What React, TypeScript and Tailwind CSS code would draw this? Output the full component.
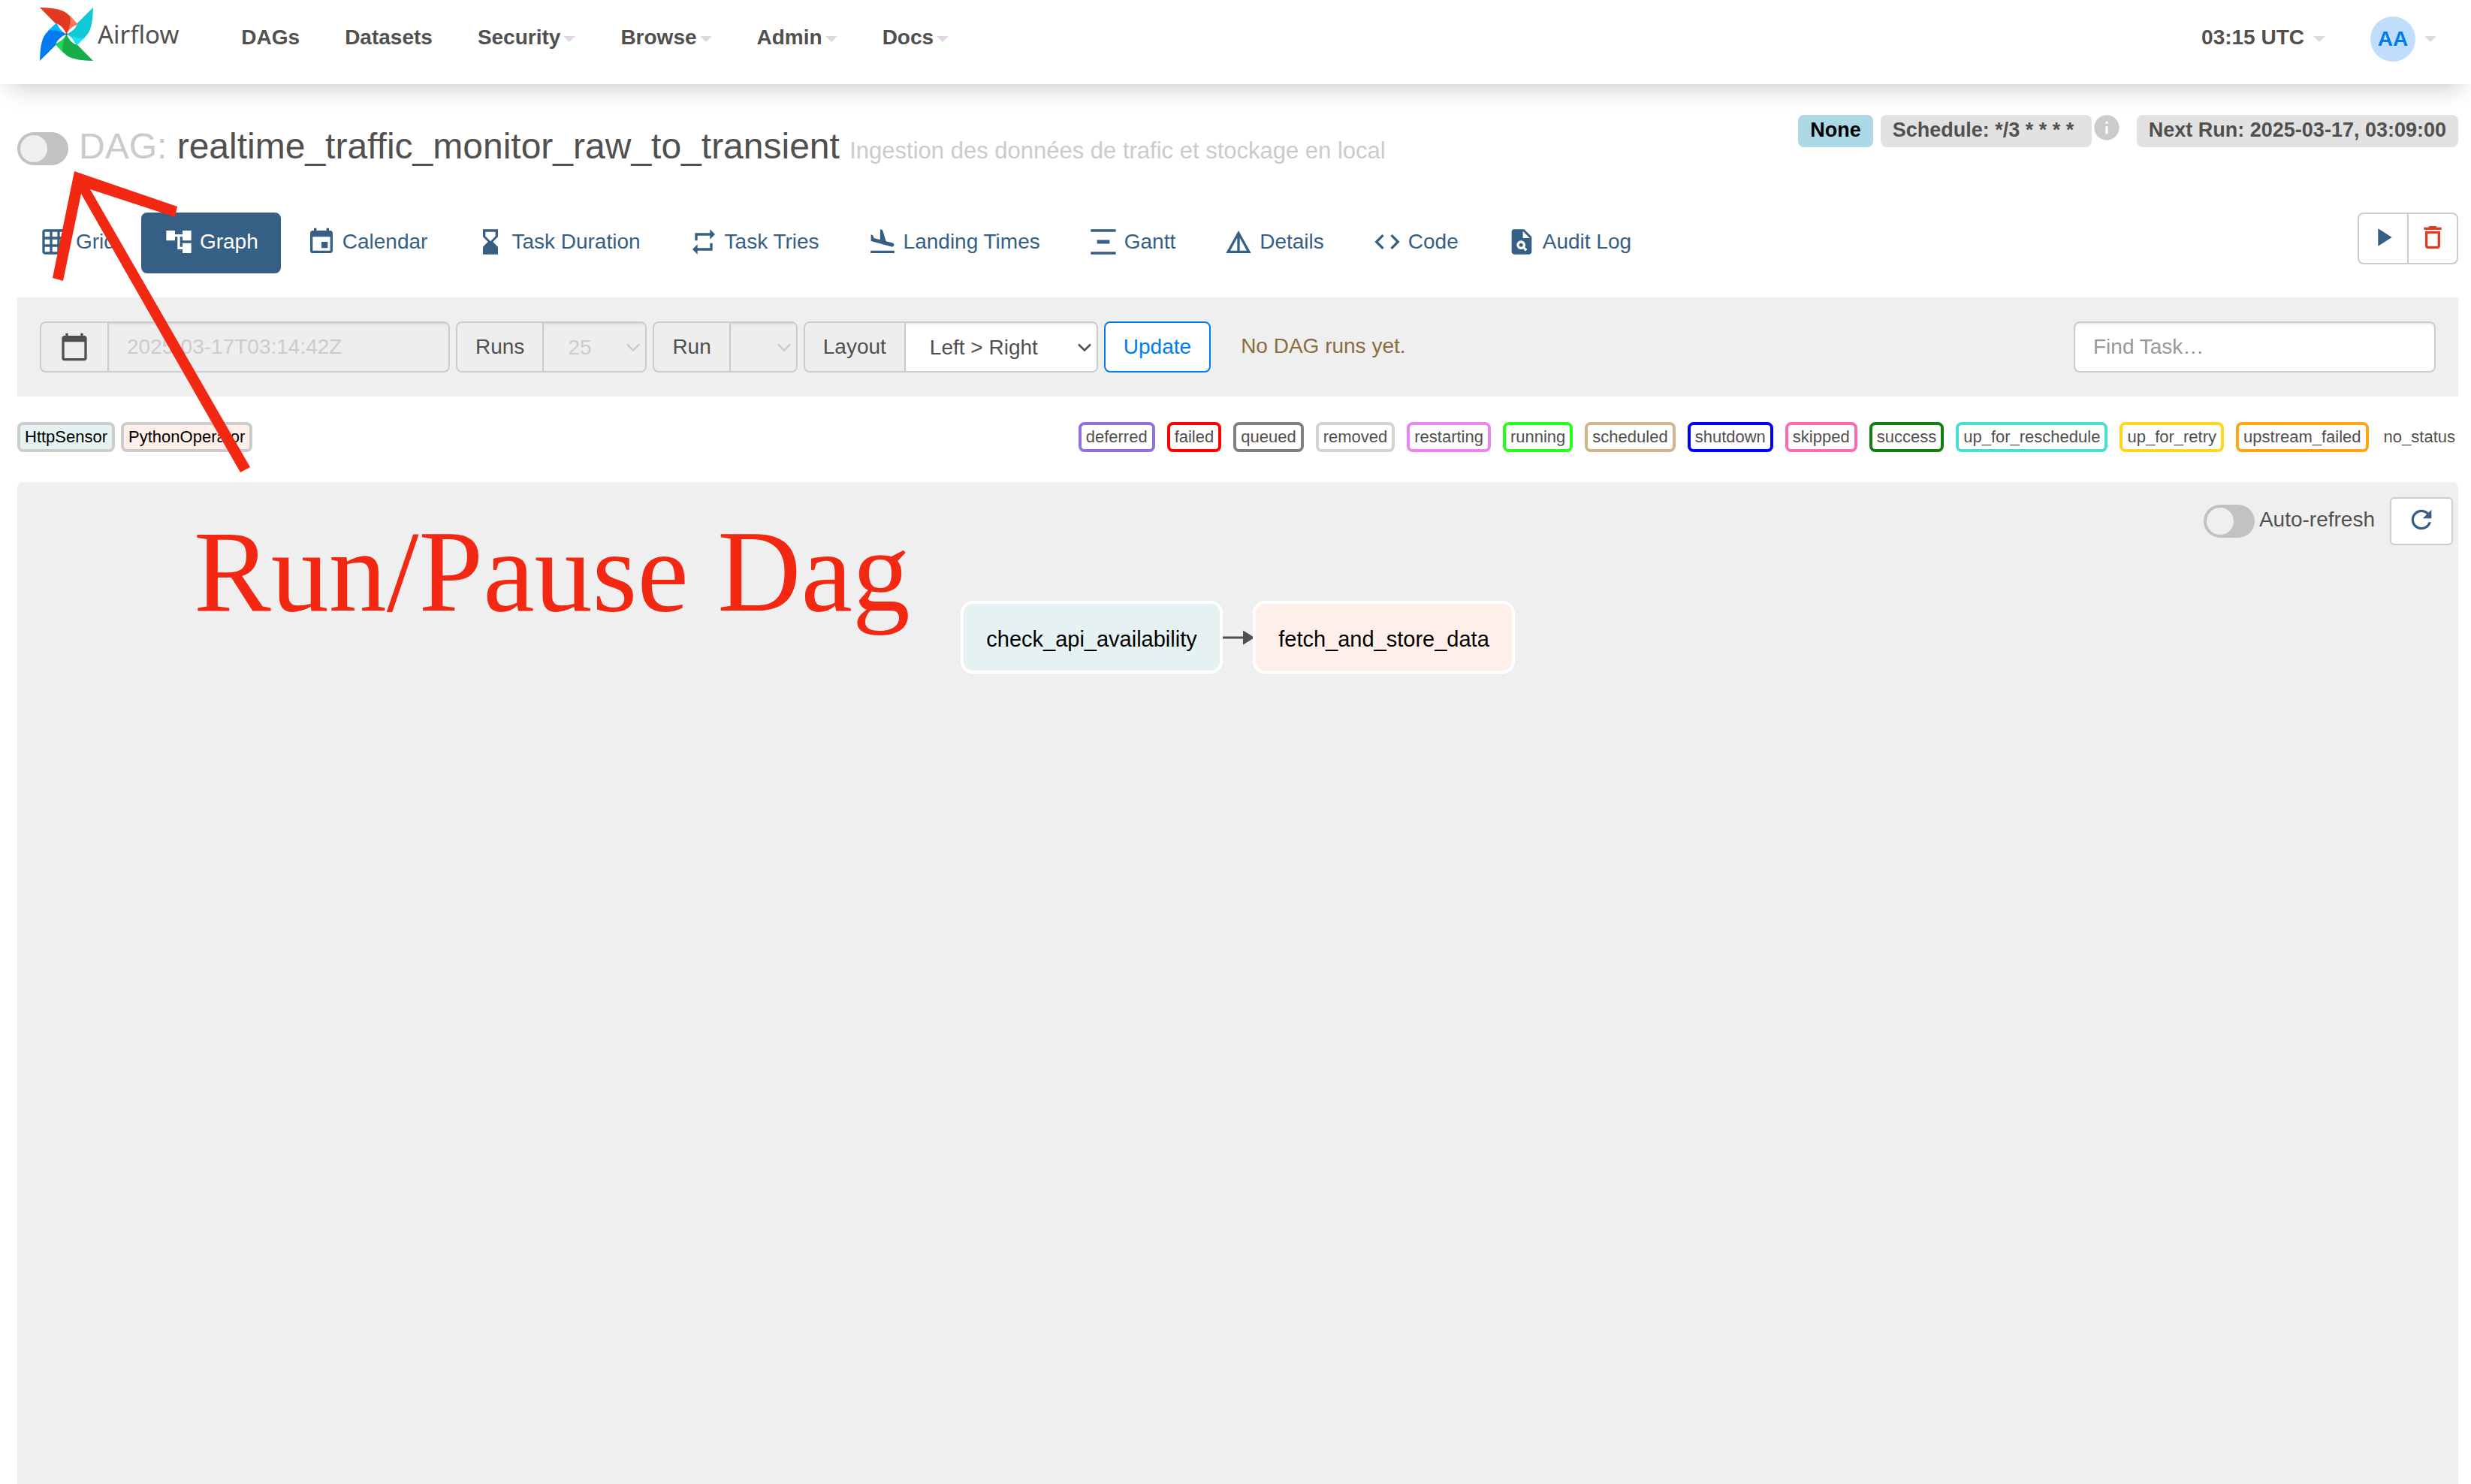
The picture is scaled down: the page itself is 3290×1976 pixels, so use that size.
import React from "react";
import type { IconType } from "react-icons";
import {
  MdAccountTree,
  MdCalendarToday,
  MdCode,
  MdDeleteOutline,
  MdDetails,
  MdEvent,
  MdFlightLand,
  MdGridOn,
  MdHourglassBottom,
  MdInfo,
  MdPlagiarism,
  MdPlayArrow,
  MdRefresh,
  MdRepeat,
  MdVerticalDistribute,
} from "react-icons/md";

const navItems = [
  { label: "DAGs", menu: false },
  { label: "Datasets", menu: false },
  { label: "Security", menu: true },
  { label: "Browse", menu: true },
  { label: "Admin", menu: true },
  { label: "Docs", menu: true },
];

const tabs: { label: string; icon: IconType; active?: boolean }[] = [
  { label: "Grid", icon: MdGridOn },
  { label: "Graph", icon: MdAccountTree, active: true },
  { label: "Calendar", icon: MdEvent },
  { label: "Task Duration", icon: MdHourglassBottom },
  { label: "Task Tries", icon: MdRepeat },
  { label: "Landing Times", icon: MdFlightLand },
  { label: "Gantt", icon: MdVerticalDistribute },
  { label: "Details", icon: MdDetails },
  { label: "Code", icon: MdCode },
  { label: "Audit Log", icon: MdPlagiarism },
];

const states = [
  { label: "deferred", border: "border-[#9370db]" },
  { label: "failed", border: "border-[#ff0000]" },
  { label: "queued", border: "border-[#808080]" },
  { label: "removed", border: "border-[#d3d3d3]" },
  { label: "restarting", border: "border-[#ee82ee]" },
  { label: "running", border: "border-[#27ff1a]" },
  { label: "scheduled", border: "border-[#d2b48c]" },
  { label: "shutdown", border: "border-[#0000ff]" },
  { label: "skipped", border: "border-[#ff69b4]" },
  { label: "success", border: "border-[#0f800f]" },
  { label: "up_for_reschedule", border: "border-[#46e0d0]" },
  { label: "up_for_retry", border: "border-[#ffd71a]" },
  { label: "upstream_failed", border: "border-[#ffa514]" },
];

function Caret({ className = "mt-1" }: { className?: string }) {
  return (
    <svg className={`h-2 w-4 shrink-0 fill-[#e2d5e4] ${className}`} viewBox="0 0 16 8" aria-hidden="true">
      <path d="M0 0H16L8 8Z" />
    </svg>
  );
}

function Pinwheel() {
  const blades = [
    { turn: 0, dark: "#e43921", light: "#ff7557" },
    { turn: 90, dark: "#11c9d6", light: "#1fe2ef" },
    { turn: 180, dark: "#18ad49", light: "#20d75c" },
    { turn: 270, dark: "#017cee", light: "#0cb6ff" },
  ];
  return (
    <svg className="size-[71px]" viewBox="0 0 213 213" aria-hidden="true">
      {blades.map((b) => (
        <g key={b.turn} transform={`rotate(${b.turn} 106.5 106.5)`}>
          <path fill={b.light} d="M118 30L152 67C128 78 114 90 106.5 106.5Z" />
          <path fill={b.dark} d="M0 0C60 2 98 8 118 33C126 45 122 76 106.5 106.5C97 86 84 68 62 63Z" />
        </g>
      ))}
      <circle cx="106.5" cy="106.5" r="4" fill="#51504f" />
    </svg>
  );
}

function Toggle({ id, label }: { id: string; label?: string }) {
  return (
    <input
      id={id}
      type="checkbox"
      role="switch"
      aria-label={label}
      className="h-11 w-[68px] shrink-0 cursor-pointer appearance-none rounded-full bg-[#c3c2c0] before:m-1 before:block before:size-9 before:rounded-full before:bg-[#efefef] before:content-['']"
    />
  );
}

function SelectField({
  id,
  label,
  options,
  width,
  disabled,
}: {
  id: string;
  label: string;
  options: string[];
  width: string;
  disabled?: boolean;
}) {
  return (
    <div className="flex h-[68px] overflow-hidden rounded-lg border-2 border-[#ccc] bg-[#eee]">
      <label htmlFor={id} className="flex items-center border-r-2 border-[#ccc] px-6">
        {label}
      </label>
      <div className={`relative ${width}`}>
        <select
          id={id}
          disabled={disabled}
          className="size-full appearance-none bg-white pt-[2px] pl-8 shadow-[inset_0_2px_2px_rgba(0,0,0,0.075)] disabled:bg-[#eee] disabled:text-[#ccc] disabled:opacity-100"
        >
          {options.map((o) => (
            <option key={o}>{o}</option>
          ))}
        </select>
        <svg
          className={`pointer-events-none absolute top-[27px] right-[7px] h-3 w-[18px] fill-none ${disabled ? "stroke-[#ccc]" : "stroke-[#51504f]"}`}
          viewBox="0 0 18 12"
          strokeWidth="2.5"
          aria-hidden="true"
        >
          <path d="M1 1.5L9 9.5L17 1.5" />
        </svg>
      </div>
    </div>
  );
}

function NavBar() {
  return (
    <nav className="flex h-28 items-start bg-white pr-[46px] pl-[53px] text-[28px] leading-10 font-bold shadow-[0_16px_32px_-12px_rgba(0,0,0,0.22)]">
      <a href="#home" className="flex items-start gap-[6px] pt-[10px]">
        <Pinwheel />
        <span className="pt-4 font-['Noto_Sans'] text-[33px] leading-10 font-normal">Airflow</span>
      </a>
      <ul className="ml-[53px] flex">
        {navItems.map((item) => (
          <li key={item.label}>
            <a href={`#${item.label.toLowerCase()}`} className="flex items-center gap-1 px-[30px] pt-[30px] pb-[42px]">
              {item.label}
              {item.menu && <Caret />}
            </a>
          </li>
        ))}
      </ul>
      <div className="ml-auto flex items-start">
        <button type="button" className="flex items-center gap-3 pt-[30px]">
          03:15 UTC
          <Caret />
        </button>
        <button type="button" className="ml-[60px] flex items-center gap-3 pt-[22px]">
          <span className="flex size-[60px] items-center justify-center rounded-full bg-[#c0ddfc] text-[#017cee]">AA</span>
          <Caret className="mt-0" />
        </button>
      </div>
    </nav>
  );
}

function DagHeader() {
  return (
    <header className="flex items-start justify-between">
      <div className="mt-[14px] flex items-start gap-[14px]">
        <div className="flex pt-[9px]">
          <Toggle id="pause" label="Pause or unpause the DAG" />
        </div>
        <h1 className="text-[48px] leading-[56px]">
          <span className="text-[#cbcbcb]">DAG: </span>
          realtime_traffic_monitor_raw_to_transient{" "}
          <small className="text-[31px] leading-none text-[#cbcbcb]">
            Ingestion des données de trafic et stockage en local
          </small>
        </h1>
      </div>
      <div className="flex items-start text-[27px] leading-10 font-bold">
        <a href="#runs" className="h-[43px] rounded-lg bg-[#add8e6] px-4 text-black">
          None
        </a>
        <a href="#schedule" className="ml-[10px] h-[43px] rounded-lg bg-[#e2e2e2] px-4">
          Schedule: */3 * * * *&nbsp;
        </a>
        <MdInfo className="-mt-[3px] size-10 text-[#cbcbcb]" />
        <span className="ml-5 h-[43px] rounded-lg bg-[#e2e2e2] px-4">Next Run: 2025-03-17, 03:09:00</span>
      </div>
    </header>
  );
}

function Tabs() {
  return (
    <div className="mt-[60px] flex items-start justify-between">
      <ul className="flex gap-1">
        {tabs.map(({ label, icon: Icon, active }) => (
          <li key={label}>
            <a
              href={`#${label.toLowerCase().replace(" ", "-")}`}
              className={`flex items-center gap-2 rounded-lg px-[30px] pt-[19px] pb-[22px] ${active ? "bg-[#355f84] text-white" : "text-[#355f84]"}`}
            >
              <Icon className="size-10" />
              {label}
            </a>
          </li>
        ))}
      </ul>
      <div className="flex h-[69px] rounded-lg border-2 border-[#ccc]">
        <button type="button" aria-label="Trigger DAG" className="border-r-2 border-[#ccc] px-3 pb-1 text-[#355f84]">
          <MdPlayArrow className="size-10" />
        </button>
        <button type="button" aria-label="Delete DAG" className="px-3 pb-1 text-[#e43921]">
          <MdDeleteOutline className="size-10" />
        </button>
      </div>
    </div>
  );
}

function FilterBar() {
  return (
    <form className="mt-8 flex items-center gap-2 bg-[#efefef] px-[30px] py-8">
      <div className="flex h-[68px] w-[546px] overflow-hidden rounded-lg border-2 border-[#ccc] bg-[#eee]">
        <label htmlFor="base-date" className="flex items-center border-r-2 border-[#ccc] px-6" aria-label="Base date">
          <MdCalendarToday className="size-10" />
        </label>
        <input
          id="base-date"
          disabled
          defaultValue="2025-03-17T03:14:42Z"
          className="min-w-0 flex-1 px-6 text-[#ccc] shadow-[inset_0_2px_2px_rgba(0,0,0,0.075)]"
        />
      </div>
      <SelectField id="num-runs" label="Runs" options={["25"]} width="w-[135px]" disabled />
      <SelectField id="run" label="Run" options={[]} width="w-[87px]" disabled />
      <SelectField id="layout" label="Layout" options={["Left > Right"]} width="w-[254px]" />
      <button type="button" className="h-[68px] rounded-lg border-2 border-[#017cee] bg-white px-6 text-[#017cee]">
        Update
      </button>
      <p className="ml-8 pb-[2px] text-[#8a6d3b]">No DAG runs yet.</p>
      <input
        type="search"
        aria-label="Find Task"
        placeholder="Find Task…"
        className="ml-auto h-[68px] w-[482px] rounded-lg border-2 border-[#ccc] bg-white px-6 shadow-[inset_0_2px_2px_rgba(0,0,0,0.075)] placeholder:text-[#999]"
      />
    </form>
  );
}

function Legend() {
  return (
    <div className="mt-[34px] flex justify-between text-[22px] leading-8">
      <div className="flex gap-2 text-black">
        <span className="rounded-lg border-4 border-[#ccc] bg-[#e6f1f2] px-[6px]">HttpSensor</span>
        <span className="rounded-lg border-4 border-[#ccc] bg-[#ffefeb] px-[6px]">PythonOperator</span>
      </div>
      <div className="flex gap-4">
        {states.map((s) => (
          <span key={s.label} className={`rounded-lg border-4 px-[6px] ${s.border}`}>
            {s.label}
          </span>
        ))}
        <span className="px-1 py-1">no_status</span>
      </div>
    </div>
  );
}

function GraphPanel() {
  return (
    <section className="mt-10 flex-1 rounded-t-lg bg-[#efefef] pt-5">
      <div className="flex items-center justify-end pr-[7px]">
        <Toggle id="auto-refresh" />
        <label htmlFor="auto-refresh" className="mr-5 pb-[5px] pl-[6px]">
          Auto-refresh
        </label>
        <button
          type="button"
          aria-label="Refresh"
          className="flex h-16 w-[84px] items-center justify-center rounded-md border-2 border-[#ccc] bg-white pb-1 text-[#355f84]"
        >
          <MdRefresh className="size-10" />
        </button>
      </div>
      <div className="mt-[74px] flex items-center justify-center text-[29px] text-black">
        <div className="flex h-[97px] w-[349px] items-center justify-center rounded-2xl border-4 border-white bg-[#e6f1f2] pt-1">
          check_api_availability
        </div>
        <svg className="h-5 w-10" viewBox="0 0 40 20" fill="#51504f" aria-hidden="true">
          <path d="M0 8.5H27V0.5L40 8.5V11.5L27 19.5V11.5H0Z" />
        </svg>
        <div className="flex h-[97px] w-[349px] items-center justify-center rounded-2xl border-4 border-white bg-[#ffefeb] pt-1">
          fetch_and_store_data
        </div>
      </div>
    </section>
  );
}

function Annotation() {
  return (
    <>
      <svg
        className="pointer-events-none absolute top-[228px] left-[69px] h-[401px] w-[264px]"
        viewBox="69 228 264 401"
        fill="#f32813"
        aria-hidden="true"
      >
        <path d="M99 228L236 275L233 289L120 252L333 622L320 629L108 258L84 374L70 370Z" />
      </svg>
      <p className="pointer-events-none absolute top-[673px] left-[258px] font-['Liberation_Serif'] text-[154px] leading-[176px] whitespace-nowrap text-[#f32813]">
        Run/Pause Dag
      </p>
    </>
  );
}

export default function App() {
  return (
    <div className="relative flex min-h-screen flex-col bg-white font-['Liberation_Sans',Arial,sans-serif] text-[28px] leading-10 text-[#51504f]">
      <NavBar />
      <main className="flex flex-1 flex-col pt-[41px] pr-[17px] pl-[23px]">
        <DagHeader />
        <Tabs />
        <FilterBar />
        <Legend />
        <GraphPanel />
      </main>
      <Annotation />
    </div>
  );
}
